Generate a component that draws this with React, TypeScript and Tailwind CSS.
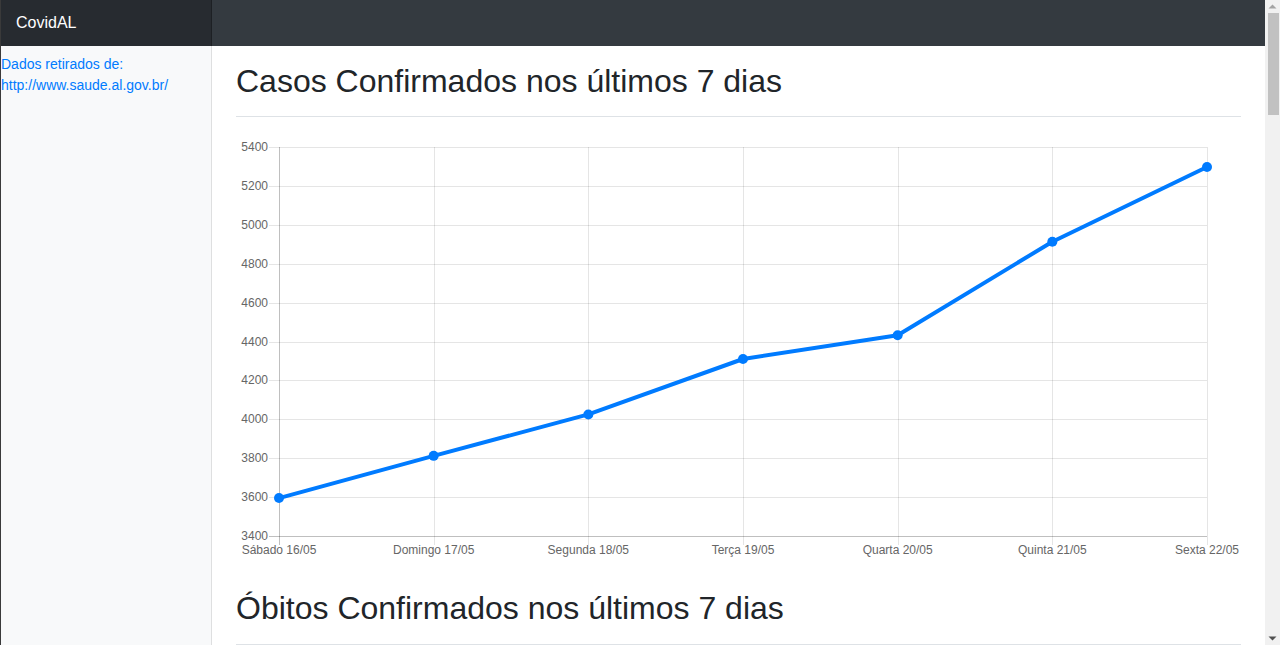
import React from "react";

const FONT = { fontFamily: '"Liberation Sans", Arial, sans-serif' };

const DAYS = [
  "Sábado 16/05",
  "Domingo 17/05",
  "Segunda 18/05",
  "Terça 19/05",
  "Quarta 20/05",
  "Quinta 21/05",
  "Sexta 22/05",
];

type Series = {
  title: string;
  values: number[];
  min: number;
  max: number;
  step: number;
};

const SERIES: Series[] = [
  {
    title: "Casos Confirmados nos últimos 7 dias",
    values: [3595, 3812, 4025, 4310, 4432, 4913, 5297],
    min: 3400,
    max: 5400,
    step: 200,
  },
  {
    title: "Óbitos Confirmados nos últimos 7 dias",
    values: [178, 186, 192, 199, 208, 216, 231],
    min: 170,
    max: 240,
    step: 10,
  },
];

const W = 1006;
const H = 440;
const LEFT = 43;
const RIGHT = 971;
const TOP = 14;
const BOTTOM = 403;

function LineChart({ s }: { s: Series }) {
  const ticks: number[] = [];
  for (let v = s.max; v >= s.min; v -= s.step) ticks.push(v);
  const yOf = (v: number) => TOP + ((s.max - v) / (s.max - s.min)) * (BOTTOM - TOP);
  const xOf = (i: number) => LEFT + (i * (RIGHT - LEFT)) / (DAYS.length - 1);
  const points = s.values.map((v, i) => `${xOf(i)},${yOf(v)}`).join(" ");

  return (
    <svg width={W} height={H} className="block" style={FONT}>
      {ticks.map((t) => {
        const y = Math.round(yOf(t)) + 0.5;
        const axis = t === s.min;
        return (
          <g key={t}>
            <line
              x1={LEFT - 10}
              x2={RIGHT}
              y1={y}
              y2={y}
              stroke={axis ? "rgba(0,0,0,0.25)" : "rgba(0,0,0,0.1)"}
              shapeRendering="crispEdges"
            />
            <text x={32} y={y} textAnchor="end" dominantBaseline="middle" fontSize={12} fill="#666">
              {t}
            </text>
          </g>
        );
      })}
      {DAYS.map((d, i) => {
        const x = Math.round(xOf(i)) + 0.5;
        return (
          <g key={d}>
            <line
              x1={x}
              x2={x}
              y1={TOP}
              y2={BOTTOM + 9}
              stroke={i === 0 ? "rgba(0,0,0,0.25)" : "rgba(0,0,0,0.1)"}
              shapeRendering="crispEdges"
            />
            <text x={xOf(i)} y={418} textAnchor="middle" dominantBaseline="middle" fontSize={12} fill="#666">
              {d}
            </text>
          </g>
        );
      })}
      <polyline points={points} fill="none" stroke="#007bff" strokeWidth={4} strokeLinejoin="round" />
      {s.values.map((v, i) => (
        <circle key={i} cx={xOf(i)} cy={yOf(v)} r={5} fill="#007bff" />
      ))}
    </svg>
  );
}

// browser scrollbar as it shows in the screenshot
function Scrollbar() {
  return (
    <div className="w-[15px] shrink-0 bg-[#f1f1f1] flex flex-col items-center">
      <svg width="15" height="13" className="block">
        <path d="M3.5 8.5 L7.5 4.5 L11.5 8.5 Z" fill="#a3a3a3" />
      </svg>
      <div className="w-[11px] ml-[2px] mr-[1px] h-[102px] bg-[#c1c1c1]" />
      <div className="flex-1" />
      <svg width="15" height="13" className="block">
        <path d="M3.5 4.5 L7.5 8.5 L11.5 4.5 Z" fill="#505050" />
      </svg>
    </div>
  );
}

export default function App() {
  return (
    <div className="h-screen flex bg-white overflow-hidden" style={FONT}>
      <div className="flex-1 min-w-0 flex flex-col border-l border-[#3a3a3a] overflow-hidden">
        <header className="h-[46px] flex bg-[#343a40] shrink-0">
          <div className="w-[211px] bg-[#272b30] shadow-[inset_-1px_0_0_rgba(0,0,0,0.25)] pl-[15px] flex items-center text-white text-base">
            CovidAL
          </div>
          <div className="flex-1" />
        </header>
        <div className="flex flex-1">
          <nav className="w-[211px] shrink-0 bg-[#f8f9fa] shadow-[inset_-1px_0_0_rgba(0,0,0,0.1)]">
            <a href="#" className="block text-[14px] leading-[21px] text-[#007bff] pt-[8px] pr-2">
              Dados retirados de:
              <br />
              http://www.saude.al.gov.br/
            </a>
          </nav>
          <main className="flex-1 min-w-0 px-6 pb-10">
            {SERIES.map((s) => (
              <section key={s.title}>
                <div className="pt-4 pb-2 mb-4 border-b border-[#dee2e6]">
                  <h2 className="text-[32px] leading-[1.2] text-[#212529] mb-2">{s.title}</h2>
                </div>
                <LineChart s={s} />
              </section>
            ))}
          </main>
        </div>
      </div>
      <Scrollbar />
    </div>
  );
}
